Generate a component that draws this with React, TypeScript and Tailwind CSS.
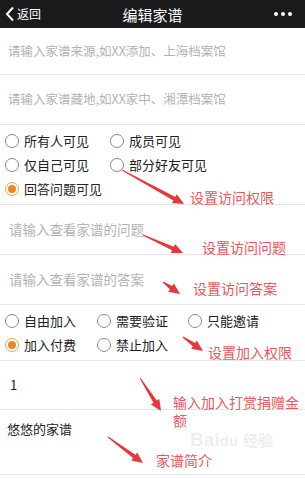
import React from 'react';

const font = { fontFamily: '"Noto Sans CJK SC", "Noto Sans", sans-serif' };

function Radio({ label, checked = false, className = '' }: { label: string; checked?: boolean; className?: string }) {
  return (
    <div className={`flex items-center gap-[5px] ${className}`}>
      <span
        className={`flex h-[14px] w-[14px] shrink-0 items-center justify-center rounded-full border-[1.5px] ${
          checked ? 'border-[#f0a54a]' : 'border-[#8a8a8a]'
        }`}
      >
        {checked && <span className="h-[8px] w-[8px] rounded-full bg-[#ec8a22]" />}
      </span>
      <span className="text-[13px] leading-none text-[#222]">{label}</span>
    </div>
  );
}

// tapered arrow: thin tail, wide head
function arrowPath(x1: number, y1: number, x2: number, y2: number) {
  const dx = x2 - x1;
  const dy = y2 - y1;
  const len = Math.hypot(dx, dy);
  const ux = dx / len;
  const uy = dy / len;
  const nx = -uy;
  const ny = ux;
  const head = 11;
  const bx = x2 - ux * head;
  const by = y2 - uy * head;
  const p = (x: number, y: number) => `${x.toFixed(1)},${y.toFixed(1)}`;
  return [
    p(x1 + nx * 0.5, y1 + ny * 0.5),
    p(bx + nx * 2, by + ny * 2),
    p(bx + nx * 5, by + ny * 5),
    p(x2, y2),
    p(bx - nx * 5, by - ny * 5),
    p(bx - nx * 2, by - ny * 2),
    p(x1 - nx * 0.5, y1 - ny * 0.5),
  ].join(' ');
}

const arrows: [number, number, number, number][] = [
  [122, 170, 184, 204],
  [143, 235, 183, 253],
  [163, 282, 180, 294],
  [183, 337, 203, 351],
  [140, 378, 161, 411],
  [108, 437, 143, 463],
];

const notes = [
  { text: '设置访问权限', cls: 'left-[190px] top-[188px]' },
  { text: '设置访问问题', cls: 'left-[202px] top-[238px]' },
  { text: '设置访问答案', cls: 'left-[193px] top-[279px]' },
  { text: '设置加入权限', cls: 'left-[208px] top-[343px]' },
  { text: '家谱简介', cls: 'left-[156px] top-[451px]' },
];

export default function App() {
  return (
    <div className="relative h-[478px] w-[305px] overflow-hidden bg-white" style={font}>
      {/* Nav bar */}
      <div className="flex h-[28px] items-center justify-between bg-[#1b1b1d] px-[5px] text-white">
        <div className="flex w-[70px] items-center">
          <svg width="10" height="16" viewBox="0 0 10 16" fill="none">
            <path d="M8 1.5 L2 8 L8 14.5" stroke="white" strokeWidth="2" />
          </svg>
          <span className="ml-[2px] text-[12px] leading-none">返回</span>
        </div>
        <span className="text-[15px] leading-none">编辑家谱</span>
        <div className="flex w-[70px] justify-end gap-[3px] pr-[8px]">
          <span className="h-[4px] w-[4px] rounded-full bg-white" />
          <span className="h-[4px] w-[4px] rounded-full bg-white" />
          <span className="h-[4px] w-[4px] rounded-full bg-white" />
        </div>
      </div>

      {/* Source */}
      <div className="flex h-[47px] items-center border-b border-[#e6e6e6] pl-[8px] text-[12.5px] text-[#b3b3b3]">
        请输入家谱来源,如XX添加、上海档案馆
      </div>
      {/* Location */}
      <div className="flex h-[50px] items-center border-b border-[#e6e6e6] pl-[8px] text-[12.5px] text-[#b3b3b3]">
        请输入家谱藏地,如XX家中、湘潭档案馆
      </div>

      {/* Visibility */}
      <div className="grid h-[80px] grid-cols-[105px_1fr] content-center gap-y-[10px] border-b border-[#e6e6e6] pl-[5px]">
        <Radio label="所有人可见" />
        <Radio label="成员可见" />
        <Radio label="仅自己可见" />
        <Radio label="部分好友可见" />
        <Radio label="回答问题可见" checked />
      </div>

      {/* Question */}
      <div className="flex h-[50px] items-center border-b border-[#e6e6e6] pl-[9px] text-[13.5px] text-[#b3b3b3]">
        请输入查看家谱的问题
      </div>
      {/* Answer */}
      <div className="flex h-[50px] items-center border-b border-[#e6e6e6] pl-[9px] text-[13.5px] text-[#b3b3b3]">
        请输入查看家谱的答案
      </div>

      {/* Join */}
      <div className="grid h-[56px] grid-cols-[92px_91px_1fr] content-center gap-y-[10px] border-b border-[#e6e6e6] pl-[5px]">
        <Radio label="自由加入" />
        <Radio label="需要验证" />
        <Radio label="只能邀请" />
        <Radio label="加入付费" checked />
        <Radio label="禁止加入" />
      </div>

      {/* Amount */}
      <div className="flex h-[49px] items-center border-b border-[#e6e6e6] pl-[10px] text-[13px] text-[#222]">
        1
      </div>

      {/* Intro */}
      <div className="h-[65px] border-b border-[#e6e6e6] pl-[7px] pt-[10px] text-[13px] leading-[18px] text-[#222]">
        悠悠的家谱
      </div>

      {/* Watermark */}
      <div
        className="pointer-events-none absolute left-[190px] top-[430px] text-[19px] font-bold leading-none text-[#eeeeee]"
        style={{ fontFamily: '"Liberation Sans", sans-serif' }}
      >
        Bai<span className="text-[15px]">du</span>{' '}
        <span className="text-[15px]" style={font}>
          经验
        </span>
      </div>

      {/* Annotation arrows */}
      <svg className="pointer-events-none absolute left-0 top-0" width="305" height="478">
        {arrows.map(([x1, y1, x2, y2], i) => (
          <polygon key={i} points={arrowPath(x1, y1, x2, y2)} fill="#e5383d" />
        ))}
      </svg>

      {/* Annotation labels */}
      {notes.map((n) => (
        <span key={n.text} className={`absolute text-[14px] leading-[18px] text-[#e9585c] ${n.cls}`}>
          {n.text}
        </span>
      ))}
      <span className="absolute left-[173px] top-[393px] w-[132px] text-[14px] leading-[18px] text-[#e9585c]">
        输入加入打赏捐赠金额
      </span>
    </div>
  );
}
